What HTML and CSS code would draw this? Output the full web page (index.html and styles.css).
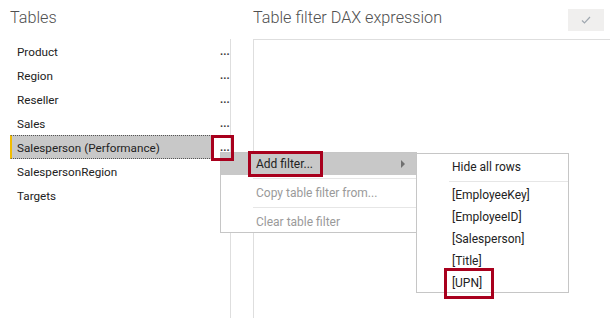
FILE: index.html
```html
<!DOCTYPE html>
<html lang="en">
<head>
    <meta charset="UTF-8">
    <meta name="viewport" content="width=device-width, initial-scale=1.0">
    <title>Manage roles</title>
    <link rel="stylesheet" href="styles.css">
</head>
<body>
    <div class="app">
        <!-- left: tables of the role -->
        <section class="tables-pane">
            <h2 class="pane-title">Tables</h2>
            <ul class="table-list">
                <li class="table-row"><span class="table-name">Product</span><span class="more">...</span></li>
                <li class="table-row"><span class="table-name">Region</span><span class="more">...</span></li>
                <li class="table-row"><span class="table-name">Reseller</span><span class="more">...</span></li>
                <li class="table-row"><span class="table-name">Sales</span><span class="more">...</span></li>
                <li class="table-row selected"><span class="table-name">Salesperson (Performance)</span><span class="more">...</span></li>
                <li class="table-row"><span class="table-name">SalespersonRegion</span><span class="more"></span></li>
                <li class="table-row"><span class="table-name">Targets</span><span class="more"></span></li>
            </ul>
        </section>

        <!-- right: DAX editor -->
        <section class="dax-pane">
            <div class="dax-header">
                <h2 class="pane-title">Table filter DAX expression</h2>
                <button class="apply-btn" title="Apply">
                    <svg width="10" height="8" viewBox="0 0 10 8"><polyline points="1,4.5 3.5,7 9,1" fill="none" stroke="#a0a8b0" stroke-width="1.2"/></svg>
                </button>
            </div>
            <div class="dax-editor"></div>
        </section>
    </div>

    <!-- context menu -->
    <div class="menu main-menu">
        <div class="menu-item active">Add filter...<span class="arrow"></span></div>
        <div class="menu-sep"></div>
        <div class="menu-item disabled">Copy table filter from...</div>
        <div class="menu-sep"></div>
        <div class="menu-item disabled">Clear table filter</div>
    </div>

    <div class="menu sub-menu">
        <div class="menu-item">Hide all rows</div>
        <div class="menu-sep"></div>
        <div class="menu-item">[EmployeeKey]</div>
        <div class="menu-item">[EmployeeID]</div>
        <div class="menu-item">[Salesperson]</div>
        <div class="menu-item">[Title]</div>
        <div class="menu-item">[UPN]</div>
    </div>

    <!-- callout boxes -->
    <div class="callout callout-more"></div>
    <div class="callout callout-add"></div>
    <div class="callout callout-upn"></div>
</body>
</html>
```

FILE: styles.css
```css
body {
    font-family: Roboto, "Noto Sans", sans-serif;
    font-size: 12px;
    color: #222;
    background-color: #fff;
    margin: 0;
    padding: 0;
    width: 610px;
    height: 318px;
    overflow: hidden;
    position: relative;
}
.app {
    display: flex;
    height: 318px;
}
.pane-title {
    margin: 0;
    font-size: 16.2px;
    font-weight: 300;
    color: #505050;
    line-height: 22px;
}
.tables-pane {
    width: 231px;
    display: flex;
    flex-direction: column;
}
.tables-pane .pane-title {
    height: 39px;
    box-sizing: border-box;
    padding: 7px 0 0 10px;
}
.table-list {
    list-style: none;
    margin: 0;
    padding: 0;
    flex: 1;
    border-right: 1px solid #dedede;
}
.table-row {
    display: flex;
    align-items: center;
    height: 24px;
}
.table-name {
    width: 202px;
    margin-left: 10px;
    padding: 2px 0 0 5px;
    border-left: 2px solid transparent;
    box-sizing: border-box;
    height: 24px;
    line-height: 22px;
    white-space: nowrap;
    font-size: 11.7px;
}
.selected .table-name {
    background-color: #c8c8c8;
    border-left-color: #f2bd00;
    border-top: 1px dotted #555;
    border-bottom: 1px dotted #555;
    line-height: 20px;
}
.more {
    margin-left: 8px;
    font-size: 11px;
    font-weight: 700;
    color: #3a3a3a;
    padding-top: 1px;
}
.dax-pane {
    flex: 1;
    display: flex;
    flex-direction: column;
    padding-left: 22px;
}
.dax-header {
    height: 39px;
    display: flex;
    justify-content: space-between;
    align-items: flex-start;
}
.dax-header .pane-title {
    padding-top: 7px;
}
.apply-btn {
    margin: 9px 6px 0 0;
    width: 36px;
    height: 22px;
    border: none;
    background-color: #f0efee;
    padding: 0;
    display: flex;
    align-items: center;
    justify-content: center;
}
.dax-editor {
    flex: 1;
    border-top: 1px solid #dedede;
    border-left: 1px solid #dedede;
}
.menu {
    position: absolute;
    background-color: #fff;
    border: 1px solid #c6c6c6;
    box-sizing: border-box;
}
.main-menu {
    left: 220px;
    top: 152px;
    width: 197px;
    height: 81px;
}
.main-menu .menu-sep:first-of-type {
    margin: 3px 0 4px 32px;
}
.main-menu .menu-sep:last-of-type {
    margin: 1px 0 0 32px;
}
.sub-menu {
    left: 416px;
    top: 153px;
    width: 153px;
    height: 140px;
    padding-top: 2px;
}
.sub-menu .menu-sep {
    margin: 3px 0 2px 32px;
}
.menu-item {
    position: relative;
    height: 22px;
    line-height: 22px;
    padding-left: 35px;
    white-space: nowrap;
}
.menu-item.active {
    background-color: #c8c8c8;
}
.menu-item.disabled {
    color: #9a9a9a;
}
.menu-sep {
    height: 1px;
    margin: 3px 0 3px 32px;
    background-color: #e6e6e6;
}
.arrow {
    position: absolute;
    right: 11px;
    top: 7px;
    border-left: 4px solid #707070;
    border-top: 4px solid transparent;
    border-bottom: 4px solid transparent;
}
.callout {
    position: absolute;
    border: 3px solid #a8001d;
    box-sizing: border-box;
}
.callout-more {
    left: 211px;
    top: 135px;
    width: 23px;
    height: 26px;
}
.callout-add {
    left: 248px;
    top: 151px;
    width: 75px;
    height: 26px;
}
.callout-upn {
    left: 444px;
    top: 268px;
    width: 50px;
    height: 31px;
}
```
